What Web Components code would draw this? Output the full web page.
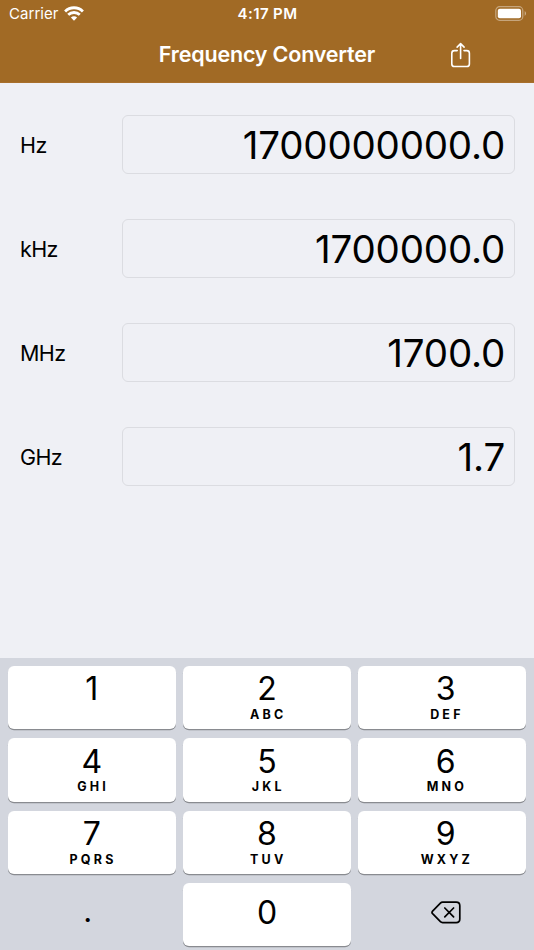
<!DOCTYPE html>
<html lang="en">
<head>
<meta charset="utf-8">
<title>Frequency Converter</title>
<style>
  body { margin: 0; background: #eff0f5; color: #000; font-family: Inter, "Liberation Sans", sans-serif; }
</style>
</head>
<body>
<converter-app></converter-app>

<script>
class StatusBar extends HTMLElement {
  constructor() {
    super();
    this.attachShadow({ mode: 'open' });
    this.shadowRoot.innerHTML = `
      <style>
        :host {
          display: grid;
          grid-template-columns: 1fr auto 1fr;
          align-items: center;
          height: 28px;
          padding: 0 8px 0 9px;
          font-size: 15px;
          line-height: 28px;
        }
        .carrier { display: flex; align-items: center; gap: 5.5px; letter-spacing: 0.05px; }
        .carrier svg { margin-top: -2px; }
        .time { font-weight: 600; letter-spacing: 0.4px; }
        .battery { justify-self: end; margin: -2px -1px 0 0; }
        svg { display: block; }
      </style>
      <div class="carrier">
        <slot name="carrier"></slot>
        <svg width="20" height="15" viewBox="0 0 20 15" fill="none" stroke="#fff" stroke-width="2.8">
          <path d="M1.1 5.4C6 .5 14 .5 18.9 5.4"/>
          <path d="M4.2 8.8C7.5 5.7 12.5 5.7 15.8 8.8"/>
          <path d="M10 14.7L6.9 11.6C8.6 9.9 11.4 9.9 13.1 11.6Z" fill="#fff" stroke="none"/>
        </svg>
      </div>
      <div class="time"><slot name="time"></slot></div>
      <svg class="battery" width="32" height="15" viewBox="0 0 32 15">
        <rect x=".8" y=".7" width="27" height="13.6" rx="3.8" fill="none" stroke="#fff" stroke-opacity=".4" stroke-width="1.2"/>
        <rect x="2.8" y="2.7" width="23.2" height="9.6" rx="2" fill="#fff"/>
        <path d="M29.7 5.1C31.5 6 31.5 9 29.7 9.9Z" fill="#fff" fill-opacity=".45"/>
      </svg>
    `;
  }
}
customElements.define('status-bar', StatusBar);

class NavBar extends HTMLElement {
  constructor() {
    super();
    this.attachShadow({ mode: 'open' });
    this.shadowRoot.innerHTML = `
      <style>
        :host {
          display: grid;
          grid-template-columns: 1fr auto 1fr;
          align-items: center;
          height: 55px;
          box-sizing: border-box;
          border-bottom: 1px solid #a86f2c;
        }
        h1 { margin: -1px 0 0; font-size: 21.5px; font-weight: 600; line-height: 53px; letter-spacing: -0.18px; }
        button { justify-self: end; margin: -1px 62px 0 0; padding: 0; border: 0; background: none; }
        svg { display: block; }
      </style>
      <span></span>
      <h1><slot></slot></h1>
      <button aria-label="Share">
        <svg width="22" height="26" viewBox="0 0 22 26" fill="none" stroke="#fff" stroke-width="1.6" stroke-linecap="round" stroke-linejoin="round">
          <path d="M7.2 8.6H4.4Q1.8 8.6 1.8 11.2V21.9Q1.8 24.5 4.4 24.5H16.8Q19.4 24.5 19.4 21.9V11.2Q19.4 8.6 16.8 8.6H14"/>
          <path d="M10.6 16.4V2M7.1 5.1L10.6 1.6L14.1 5.1"/>
        </svg>
      </button>
    `;
  }
}
customElements.define('nav-bar', NavBar);

class UnitField extends HTMLElement {
  constructor() {
    super();
    this.attachShadow({ mode: 'open' });
    this.shadowRoot.innerHTML = `
      <style>
        :host { display: grid; grid-template-columns: 102px 1fr; align-items: center; height: 59px; }
        .label { padding-top: 2px; font-size: 21.5px; line-height: 57px; letter-spacing: -0.6px; }
        .value {
          height: 59px;
          box-sizing: border-box;
          padding-right: 9px;
          border: 1px solid #dbdce1;
          border-radius: 6px;
          font-size: 38.5px;
          line-height: 58px;
          letter-spacing: -0.2px;
          text-align: right;
        }
      </style>
      <div class="label"><slot></slot></div>
      <div class="value"></div>
    `;
  }

  connectedCallback() {
    this.shadowRoot.querySelector('.value').textContent = this.getAttribute('value');
  }
}
customElements.define('unit-field', UnitField);

class PadKey extends HTMLElement {
  constructor() {
    super();
    this.attachShadow({ mode: 'open' });
    this.shadowRoot.innerHTML = `
      <style>
        :host {
          display: flex;
          flex-direction: column;
          align-items: center;
          box-sizing: border-box;
          height: 63.3px;
          padding-top: 4.3px;
          border-radius: 6px;
          background: #fff;
          box-shadow: 0 1.2px 0 #898b90;
        }
        :host([plain]) { background: none; box-shadow: none; }
        :host([middle]) { justify-content: center; padding: 0 0 3px; }
        :host([shifted]) { padding-left: 7px; }
        .digit { font-size: 32px; line-height: 38px; }
        .letters { margin-top: -1.3px; padding-left: 2.5px; font-size: 12.5px; font-weight: 700; line-height: 15px; letter-spacing: 3.2px; }
        .letters:empty { display: none; }
      </style>
      <div class="digit"><slot></slot></div>
      <div class="letters"></div>
    `;
  }

  connectedCallback() {
    this.shadowRoot.querySelector('.letters').textContent = this.getAttribute('letters') || '';
  }
}
customElements.define('pad-key', PadKey);

class NumberPad extends HTMLElement {
  constructor() {
    super();
    this.attachShadow({ mode: 'open' });
    this.shadowRoot.innerHTML = `
      <style>
        :host {
          display: grid;
          grid-template-columns: repeat(3, 1fr);
          gap: 9px 7.5px;
          align-content: start;
          box-sizing: border-box;
          height: 292px;
          padding: 8px 8px 0;
          background: #d3d6de;
        }
        .dot { display: block; padding: 0 8px 4px 0; font-size: 31px; line-height: 34px; }
        svg { display: block; margin-bottom: 1px; }
      </style>
      <pad-key>1</pad-key>
      <pad-key letters="ABC">2</pad-key>
      <pad-key shifted letters="DEF">3</pad-key>
      <pad-key letters="GHI">4</pad-key>
      <pad-key letters="JKL">5</pad-key>
      <pad-key shifted letters="MNO">6</pad-key>
      <pad-key letters="PQRS">7</pad-key>
      <pad-key letters="TUV">8</pad-key>
      <pad-key shifted letters="WXYZ">9</pad-key>
      <pad-key plain middle><span class="dot">.</span></pad-key>
      <pad-key middle>0</pad-key>
      <pad-key plain middle shifted>
        <svg width="30" height="23" viewBox="0 0 30 23" fill="none" stroke="#000" stroke-width="1.7" stroke-linecap="round" stroke-linejoin="round">
          <path d="M11.6 1.2H25.2Q28.8 1.2 28.8 4.8V18Q28.8 21.6 25.2 21.6H11.6Q10.3 21.6 9.4 20.7L1.6 12.7Q.4 11.4 1.6 10.1L9.4 2.1Q10.3 1.2 11.6 1.2Z"/>
          <path d="M13.8 7L22.6 15.8M22.6 7L13.8 15.8"/>
        </svg>
      </pad-key>
    `;
  }
}
customElements.define('number-pad', NumberPad);

class ConverterApp extends HTMLElement {
  constructor() {
    super();
    this.attachShadow({ mode: 'open' });
    this.shadowRoot.innerHTML = `
      <style>
        :host { display: flex; flex-direction: column; width: 534px; height: 950px; overflow: hidden; }
        header { flex: none; background: #a16a25; color: #fff; }
        main { flex: 1; display: flex; flex-direction: column; gap: 45px; padding: 32px 19px 0 20px; }
        number-pad { flex: none; }
      </style>
      <header>
        <status-bar>
          <span slot="carrier">Carrier</span>
          <span slot="time">4:17 PM</span>
        </status-bar>
        <nav-bar>Frequency Converter</nav-bar>
      </header>
      <main>
        <unit-field value="1700000000.0">Hz</unit-field>
        <unit-field value="1700000.0">kHz</unit-field>
        <unit-field value="1700.0">MHz</unit-field>
        <unit-field value="1.7">GHz</unit-field>
      </main>
      <number-pad></number-pad>
    `;
  }
}
customElements.define('converter-app', ConverterApp);
</script>
</body>
</html>
